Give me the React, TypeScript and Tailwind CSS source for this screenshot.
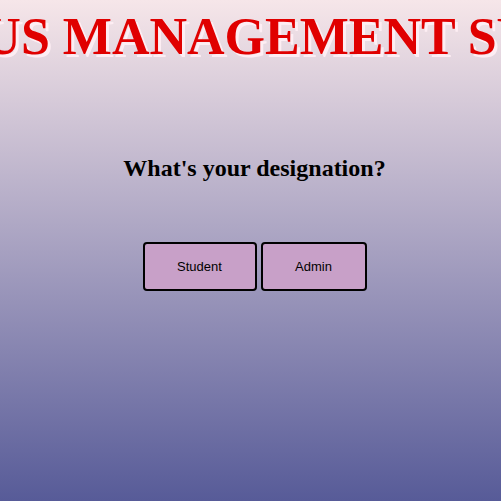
export default function App() {
  return (
    <div className="min-h-[501px] w-full overflow-hidden bg-[linear-gradient(to_bottom,#f6e6e9,#575b98)] pl-[8px] font-['Liberation_Serif',serif]">
      <div className="flex justify-center pt-[7px]">
        <h1 className="whitespace-nowrap text-[52px] font-bold leading-[60px] text-[#e00000] [text-shadow:3px_3px_0_rgba(255,240,245,0.9)]">
          CAMPUS MANAGEMENT SYSTEM
        </h1>
      </div>
      <h2 className="mt-[87px] text-center text-[24px] font-bold leading-[28px] text-black">
        What&apos;s your designation?
      </h2>
      <div className="mt-[60px] flex justify-center gap-[4px] font-['Liberation_Sans',Arial,sans-serif] text-[13px] text-black">
        <button className="h-[49px] w-[114px] rounded-[4px] border-2 border-black bg-[#c8a0c8]">Student</button>
        <button className="h-[49px] w-[106px] rounded-[4px] border-2 border-black bg-[#c8a0c8]">Admin</button>
      </div>
    </div>
  );
}
